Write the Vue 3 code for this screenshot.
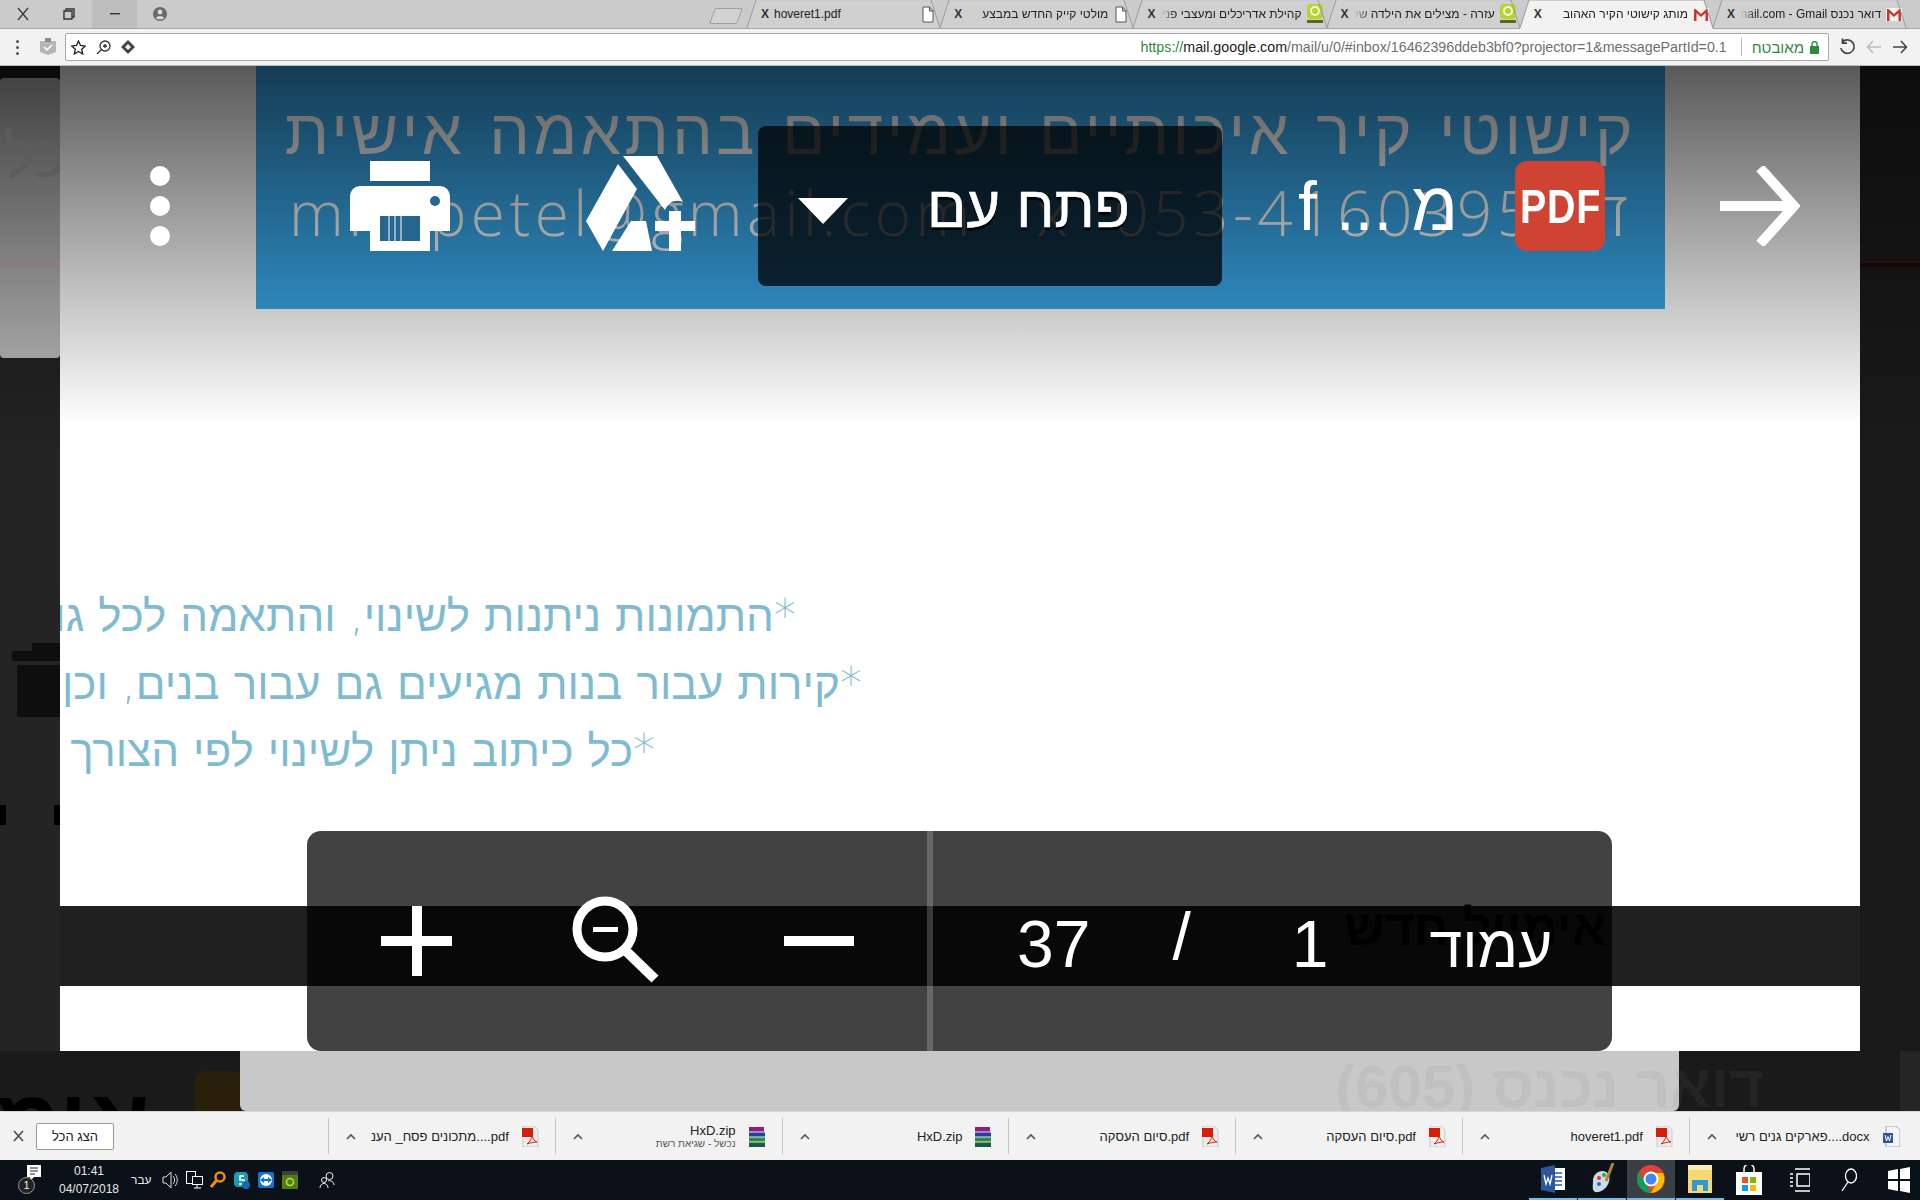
<template>
  <div class="screen">
    <header class="tabbar">
      <div class="winctl">
        <span class="wc wc-close">
          <svg width="14" height="14" viewBox="0 0 14 14"><path d="M2 1l10 12M12 1L2 13" stroke="#333" stroke-width="1.2" fill="none" /></svg>
        </span>
        <span class="wc wc-restore">
          <svg width="12" height="12" viewBox="0 0 12 12"><path d="M3 3V1h8v8H9M1 3h8v8H1z" stroke="#333" stroke-width="1.4" fill="none" /></svg>
        </span>
        <span class="wc wc-min">
          <svg width="10" height="2" viewBox="0 0 10 2"><rect width="10" height="1.4" fill="#333" /></svg>
        </span>
        <span class="wc wc-user">
          <svg width="14" height="14" viewBox="0 0 14 14"><circle cx="7" cy="7" r="7" fill="#6a6a6a" /><circle cx="7" cy="5" r="2.4" fill="#ddd" /><path d="M2.8 11c1-2.2 7.400-2.200 8.400 0-2 1.800-6.400 1.800-8.400 0z" fill="#ddd" /></svg>
        </span>
      </div>
      <span class="newtab"></span>
      <div v-for="tab in tabs" :key="tab.id" class="tab" :class="{ active: tab.active }">
        <span class="tab-fill"></span>
        <span class="tab-x">X</span>
        <span class="tab-title" :class="{ ltr: tab.ltr }">{{ tab.title }}</span>
        <span class="fav">
          <svg v-if="tab.icon === 'doc'" width="12" height="17" viewBox="0 0 12 17"><path d="M1 1h6.500L11 4.500V16H1zM7.500 1v4H11" fill="#fff" stroke="#555" /></svg>
          <svg v-else-if="tab.icon === 'gmail'" width="16" height="13" viewBox="0 0 16 13"><rect width="16" height="13" fill="#f1f1f1" /><path d="M1 13V1h1.500L8 6l5.500-5H15v12h-2.500V5L8 9 3.500 5v8z" fill="#c5372c" /></svg>
          <svg v-else width="16" height="20" viewBox="0 0 16 20"><rect width="16" height="15" rx="4" fill="#b7d32e" /><circle cx="8" cy="7" r="4" fill="none" stroke="#f4f7d8" stroke-width="2" /><rect y="16" width="16" height="3" fill="#5c6a1e" /></svg>
        </span>
      </div>
    </header>

    <div class="toolbar">
      <span class="menu-dots"><i></i><i></i><i></i></span>
      <svg class="ext" width="18" height="18" viewBox="0 0 18 18"><path d="M1 3h16v11l-8 3-8-3z" fill="#b5b5b5" /><path d="M6 0h6v4H6z" fill="#8d8d8d" /><path d="M5 9l3 3 5-5" stroke="#fff" stroke-width="1.500" fill="none" /></svg>
      <div class="address">
        <svg width="15" height="15" viewBox="0 0 15 15"><path d="M7.500 1l2 4.500 4.800.5-3.600 3.200 1 4.800-4.200-2.500L3.300 14l1-4.800L.7 6l4.800-.5z" fill="none" stroke="#222" stroke-width="1.300" /></svg>
        <svg width="15" height="15" viewBox="0 0 15 15"><circle cx="9" cy="6" r="5" fill="none" stroke="#333" stroke-width="1.300" /><path d="M5.500 9.500L1 14M9 4v4M7 6h4" stroke="#333" stroke-width="1.300" fill="none" /></svg>
        <svg width="14" height="14" viewBox="0 0 14 14"><path d="M7 0l7 7-7 7-7-7z" fill="#444" /><path d="M7 4l3 3-3 3-3-3z" fill="#eee" /></svg>
        <span class="url"><b>https://</b><em>mail.google.com</em>/mail/u/0/#inbox/16462396ddeb3bf0?projector=1&amp;messagePartId=0.1</span>
        <span class="secure">מאובטח</span>
        <svg class="lock" width="9" height="13" viewBox="0 0 9 13"><rect y="5" width="9" height="8" fill="#2e8b3d" /><path d="M2 6V3a2.500 2.500 0 015 0v3" fill="none" stroke="#2e8b3d" stroke-width="1.400" /></svg>
      </div>
      <div class="nav">
        <svg width="18" height="18" viewBox="0 0 16 16"><path d="M4 3.500A6 6 0 112.500 9M4 .5v4h4" fill="none" stroke="#444" stroke-width="1.600" /></svg>
        <svg width="16" height="14" viewBox="0 0 16 14"><path d="M15 7H2M7 1L1.500 7 7 13" fill="none" stroke="#bcbcbc" stroke-width="1.500" /></svg>
        <svg width="16" height="14" viewBox="0 0 16 14"><path d="M1 7h13M9 1l5.500 6L9 13" fill="none" stroke="#444" stroke-width="1.500" /></svg>
      </div>
    </div>

    <main class="viewer">
      <aside class="strip strip-left">
        <div class="sliver"><span class="sliver-text">כל</span><i class="sliver-line"></i></div>
        <svg class="trash" width="48" height="74" viewBox="0 0 48 74"><path d="M0 8h48v10H0zM20 0h28v8H20zM5 22h43v52H5z" fill="#0e0e0e" /></svg>
        <div class="blips"><i></i><i></i></div>
      </aside>

      <section class="page">
        <div class="banner">
          <p class="banner-line">קישוטי קיר איכותיים ועמידים בהתאמה אישית</p>
          <p class="banner-line second">mrs.petel@gmail.com &nbsp; x &nbsp;053-4160395 : ד</p>
        </div>
        <div class="notes">
          <p v-for="note in notes" :key="note.width" class="note" :style="{ width: note.width + 'px' }">{{ note.text }}</p>
        </div>
      </section>

      <aside class="strip strip-right"><i class="strip-line"></i></aside>

      <div class="lower">
        <span class="lower-word">אימ</span>
        <span class="lower-tag"></span>
        <div class="lower-box"></div>
        <span class="lower-title">דואר נכנס (605)</span>
        <span class="lower-edge"></span>
      </div>

      <div class="shade"></div>

      <div class="top-controls">
        <span class="dots"><i></i><i></i><i></i></span>
        <svg class="ic-print" width="100" height="90" viewBox="0 0 100 90">
          <path d="M20 0h60v20H20zM10 25h80a10 10 0 0110 10v35H80v20H20V70H0V35a10 10 0 0110-10z" fill="#fff" />
          <circle cx="85" cy="40" r="5" fill="#24668f" />
          <rect x="30" y="55" width="40" height="25" fill="#24668f" />
          <path d="M39 55v25M45 55v25M51 55v25" stroke="#fff" stroke-width="1" />
        </svg>
        <svg class="ic-drive" width="109" height="95" viewBox="0 0 109 95">
          <path d="M32 8L0 65l17 30 34-62z" fill="#fff" />
          <path d="M37 0h34l26 46c-8-3-14 0-18 8z" fill="#fff" />
          <path d="M26 95l19-30h15l6 30z" fill="#fff" />
          <path d="M69 65h14V55h12v10h14v10H95v20H83V75H69z" fill="#fff" />
        </svg>
        <div class="open-with">
          <span class="caret"></span>
          <span class="open-label">פתח עם</span>
        </div>
        <span class="file-name">מ ... f</span>
        <div class="pdf-badge"><span>PDF</span></div>
        <svg class="ic-arrow" width="80" height="80" viewBox="0 0 80 80"><path d="M0 40h72M40 2l34 38-34 38" fill="none" stroke="#fff" stroke-width="10" /></svg>
      </div>

      <div class="band"><span class="band-text">אימייל חדש</span></div>

      <div class="pager">
        <div class="pager-zoom">
          <svg width="71" height="70" viewBox="0 0 71 70"><path d="M31 0h10v30h30v10H41v30H31V40H0V30h31z" fill="#fff" /></svg>
          <svg class="ic-mag" width="88" height="88" viewBox="0 0 88 88"><circle cx="33" cy="33" r="28" fill="none" stroke="#fff" stroke-width="9" /><path d="M21 31h25v5H21z" fill="#fff" /><path d="M55 56l28 27" stroke="#fff" stroke-width="10" /></svg>
          <svg class="ic-minus" width="70" height="10" viewBox="0 0 70 10"><rect width="70" height="10" fill="#fff" /></svg>
        </div>
        <i class="pager-rule"></i>
        <div class="pager-count">
          <span class="n n-total">37</span>
          <span class="n n-slash">/</span>
          <span class="n n-current">1</span>
          <span class="n n-word">עמוד</span>
        </div>
      </div>
    </main>

    <div class="downloads">
      <svg class="dl-close" width="11" height="12" viewBox="0 0 11 12"><path d="M1 1l9 10M10 1L1 11" stroke="#555" stroke-width="1.800" /></svg>
      <button class="show-all">הצג הכל</button>
      <div class="dl-list">
        <div v-for="item in downloads" :key="item.id" class="dl-item">
          <svg width="10" height="7" viewBox="0 0 10 7"><path d="M1 6l4-4 4 4" fill="none" stroke="#555" stroke-width="1.600" /></svg>
          <div class="dl-text">
            <span class="dl-name">{{ item.name }}</span>
            <span v-if="item.note" class="dl-note">{{ item.note }}</span>
          </div>
          <svg v-if="item.kind === 'pdf'" class="dl-icon" width="17" height="21" viewBox="0 0 17 21"><path d="M1 0h11l4 4v17H1z" fill="#eee" stroke="#c8c8c8" /><rect y="2" width="11" height="9" fill="#d81e06" /><path d="M5 18c3-2 5-6 5-9 1 4 2 6 5 7-4 0-7 1-10 2z" fill="none" stroke="#d81e06" /></svg>
          <svg v-else-if="item.kind === 'zip'" class="dl-icon" width="17" height="21" viewBox="0 0 17 21"><rect y="1" width="15" height="5" fill="#8e1f7d" /><rect y="6" width="16" height="5" fill="#2a3f9a" /><rect y="11" width="16" height="5" fill="#2f8a4a" /><rect y="16" width="16" height="5" fill="#1c5a3a" /><path d="M0 6h16M0 11h16M0 16h16" stroke="#e8e8e8" /></svg>
          <svg v-else class="dl-icon" width="17" height="21" viewBox="0 0 17 21"><path d="M3 0h10l4 4v17H3z" fill="#f5f5f5" stroke="#9aa5b8" /><rect y="7" width="10" height="10" fill="#2b579a" /><path d="M2 9l1.500 6L5 10.500 6.500 15 8 9" fill="none" stroke="#fff" /></svg>
        </div>
      </div>
    </div>

    <footer class="taskbar">
      <div class="tray">
        <span class="action">
          <svg width="16" height="16" viewBox="0 0 16 16"><path d="M1 0h14v12H8l-4 4v-4H1z" fill="#fff" /><path d="M4 3h8M4 6h8M4 9h5" stroke="#222" /></svg>
          <b class="action-count">1</b>
        </span>
        <span class="clock"><span>01:41</span><span>04/07/2018</span></span>
        <span class="lang">עבר</span>
        <svg class="t1" width="16" height="18" viewBox="0 0 16 18"><path d="M1 6h3l5-5v16l-5-5H1z" fill="none" stroke="#ddd" /><path d="M11 5c2 2 2 6 0 8M13 3c3 3 3 9 0 12" fill="none" stroke="#ddd" /></svg>
        <svg class="t2" width="17" height="18" viewBox="0 0 17 18"><rect x=".5" y=".5" width="9" height="12" fill="none" stroke="#fff" /><rect x="6.500" y="5.500" width="10" height="8" fill="#0a1118" stroke="#fff" /><path d="M11 14v3M8 17h7" stroke="#fff" /></svg>
        <svg class="t3" width="16" height="18" viewBox="0 0 16 18"><circle cx="10" cy="6" r="4.500" fill="none" stroke="#f08a1c" stroke-width="2.500" /><path d="M6.500 9.500L1 16" stroke="#f08a1c" stroke-width="3" /></svg>
        <svg class="t4" width="16" height="18" viewBox="0 0 16 18"><rect y="1" width="14" height="15" rx="4" fill="#1f9bb0" /><path d="M10 5H6v4h4v4H5" fill="none" stroke="#fff" stroke-width="1.500" /><circle cx="12" cy="14" r="4" fill="#1765b5" /></svg>
        <svg class="t5" width="16" height="18" viewBox="0 0 16 18"><rect y="1" width="16" height="16" rx="2" fill="#0e76d2" /><circle cx="8" cy="9" r="6" fill="#fff" /><path d="M2 9l4-3v2h4V6l4 3-4 3v-2H6v2z" fill="#0e76d2" /></svg>
        <svg class="t6" width="16" height="18" viewBox="0 0 16 18"><rect width="16" height="18" fill="#3b3f42" /><rect y="4" width="16" height="14" fill="#4f7d10" /><circle cx="8" cy="11" r="3.500" fill="none" stroke="#b6e24a" stroke-width="1.500" /></svg>
        <svg class="t7" width="16" height="18" viewBox="0 0 16 18"><circle cx="10.500" cy="5" r="3.500" fill="none" stroke="#eee" /><circle cx="5" cy="9" r="2.500" fill="none" stroke="#eee" /><path d="M1 17c0-6 8-6 8 0M9 10c3-1 6 1 6 4" fill="none" stroke="#eee" /></svg>
      </div>
      <div class="apps">
        <span class="app on">
          <svg width="24" height="28" viewBox="0 0 24 28"><path d="M8 3h16v22H8z" fill="#fff" /><path d="M11 8h10M11 12h10M11 16h10M11 20h10" stroke="#2b579a" stroke-width="1.600" /><path d="M0 3l14-3v28L0 25z" fill="#2b579a" /><path d="M3 10l2 9 2-6 2 6 2-9" fill="none" stroke="#fff" stroke-width="1.300" /></svg>
        </span>
        <span class="app on">
          <svg width="24" height="32" viewBox="0 0 24 32"><path d="M3 18c0-8 8-12 13-9 5 3 4 10 1 14-3 5-11 8-13 5-2-2-1-6-1-10z" fill="#c9dbe6" /><circle cx="9" cy="15" r="2" fill="#d33" /><circle cx="14" cy="12" r="2" fill="#3a3" /><circle cx="9" cy="21" r="2" fill="#36c" /><path d="M23 0l-7 18" stroke="#b5803a" stroke-width="3" /></svg>
        </span>
        <span class="app on active">
          <svg width="28" height="28" viewBox="0 0 28 28"><circle cx="14" cy="14" r="14" fill="#db4437" /><path d="M14 28a14 14 0 01-12-21l7 12z" fill="#0f9d58" /><path d="M14 8h12a14 14 0 01-12 20l6-11z" fill="#fbbc05" /><circle cx="14" cy="14" r="6.500" fill="#4285f4" stroke="#fff" stroke-width="2" /></svg>
        </span>
        <span class="app on">
          <svg width="24" height="28" viewBox="0 0 24 28"><path d="M0 0h24v28H0z" fill="#f8d775" /><path d="M0 0h24v5H0z" fill="#fcecb0" /><path d="M4 26V15h16v11h-5v-6H9v6z" fill="#2b9ad6" /></svg>
        </span>
        <span class="app">
          <svg width="26" height="30" viewBox="0 0 26 30"><path d="M8 7V4a5 5 0 0110 0v3" fill="none" stroke="#fff" stroke-width="1.500" /><rect y="7" width="26" height="23" fill="#fff" /><rect x="6" y="12" width="6" height="6" fill="#f25022" /><rect x="14" y="12" width="6" height="6" fill="#7fba00" /><rect x="6" y="20" width="6" height="6" fill="#00a4ef" /><rect x="14" y="20" width="6" height="6" fill="#ffb900" /></svg>
        </span>
        <svg class="a-task" width="20" height="26" viewBox="0 0 20 26"><path d="M5 2h15M5 24h15M7 7h13v12H7zM0 7h3M0 11h3M0 15h3M0 19h3" fill="none" stroke="#fff" stroke-width="1.500" /></svg>
        <svg class="a-search" width="16" height="24" viewBox="0 0 16 24"><ellipse cx="10" cy="8" rx="5.500" ry="7" fill="none" stroke="#fff" stroke-width="1.300" /><path d="M7 14L1 23" stroke="#fff" stroke-width="1.300" /></svg>
        <svg class="a-win" width="22" height="26" viewBox="0 0 22 26"><path d="M0 4l10-2v10H0zM12 2l10-2v12H12zM0 14h10v10L0 22zM12 14h10v12l-10-2z" fill="#fff" /></svg>
      </div>
    </footer>
  </div>
</template>

<script setup>
const tabs = [
  { id: 6, title: "hoveret1.pdf", icon: "doc", ltr: true },
  { id: 5, title: "מולטי קייק החדש במבצע", icon: "doc" },
  { id: 4, title: "קהילת אדריכלים ומעצבי פנים", icon: "site" },
  { id: 3, title: "עזרה - מצילים את הילדה שלנו", icon: "site" },
  { id: 2, title: "מותג קישוטי הקיר האהוב", icon: "gmail", active: true },
  { id: 1, title: "דואר נכנס nakhon@gmail.com - Gmail", icon: "gmail" },
];

const notes = [
  { text: "*התמונות ניתנות לשינוי, והתאמה לכל גודל", width: 736 },
  { text: "*קירות עבור בנות מגיעים גם עבור בנים, וכן להיפך", width: 802 },
  { text: "*כל כיתוב ניתן לשינוי לפי הצורך", width: 595 },
];

const downloads = [
  { id: 7, name: "מתכונים פסח_ הענ....pdf", kind: "pdf" },
  { id: 6, name: "HxD.zip", note: "נכשל - שגיאת רשת", kind: "zip" },
  { id: 5, name: "HxD.zip", kind: "zip" },
  { id: 4, name: "סיום העסקה.pdf", kind: "pdf" },
  { id: 3, name: "סיום העסקה.pdf", kind: "pdf" },
  { id: 2, name: "hoveret1.pdf", kind: "pdf" },
  { id: 1, name: "פארקים גנים רשי....docx", kind: "doc" },
];
</script>

<style>
html,
body {
  margin: 0;
  background: #111;
}
</style>

<style scoped>
.screen {
  width: 1920px;
  height: 1200px;
  display: flex;
  flex-direction: column;
  overflow: hidden;
  font-family: "Liberation Sans", Arial, sans-serif;
}

/* tab strip */
.tabbar {
  height: 28px;
  flex: none;
  display: flex;
  align-items: stretch;
  background: #cbcbcb;
  border-bottom: 1px solid #a3a3a3;
}
.winctl {
  width: 712px;
  flex: none;
  display: flex;
  align-items: center;
}
.wc {
  height: 28px;
  display: flex;
  align-items: center;
  justify-content: center;
}
.wc-close {
  width: 46px;
}
.wc-restore {
  width: 46px;
}
.wc-min {
  width: 45px;
  background: #bdbdbd;
}
.wc-user {
  width: 46px;
}
.newtab {
  width: 26px;
  height: 14px;
  flex: none;
  margin: 8px 7px 0 0;
  border: 1px solid #9d9d9d;
  border-radius: 2px;
  background: #d2d2d2;
  transform: skewX(-20deg);
}
.tab {
  width: 193.200px;
  flex: none;
  position: relative;
  display: flex;
  align-items: center;
  gap: 5px;
  padding: 0 2px 0 14px;
  box-sizing: border-box;
}
.tab::before,
.tab::after {
  content: "";
  position: absolute;
  top: 0;
  bottom: 0;
  width: 1px;
  background: #9b9b9b;
  z-index: 1;
}
.tab::before {
  left: 4px;
  transform: skewX(-18deg);
}
.tab::after {
  right: 4px;
  transform: skewX(18deg);
}
.tab-fill {
  position: absolute;
  inset: 1px 0 0;
  background: #d0d0d0;
  clip-path: polygon(9px 0, calc(100% - 9px) 0, 100% 100%, 0 100%);
}
.tab.active .tab-fill {
  inset: 1px 0 -1px;
  background: #f2f2f2;
}
.tab-x {
  position: relative;
  font-size: 12px;
  font-weight: 700;
  color: #333;
}
.tab-title {
  position: relative;
  flex: 1;
  min-width: 0;
  overflow: hidden;
  white-space: nowrap;
  direction: rtl;
  text-align: right;
  font-size: 12px;
  color: #222;
  -webkit-mask-image: linear-gradient(to right, transparent, #000 16px);
}
.tab-title.ltr {
  direction: ltr;
  text-align: left;
  -webkit-mask-image: none;
}
.fav {
  position: relative;
  width: 16px;
  flex: none;
  display: flex;
  justify-content: center;
  margin-right: 2px;
}

/* address row */
.toolbar {
  height: 37px;
  flex: none;
  display: flex;
  align-items: center;
  background: #f2f2f2;
  border-bottom: 1px solid #b8b8b8;
  box-sizing: border-box;
}
.menu-dots {
  width: 34px;
  flex: none;
  display: flex;
  flex-direction: column;
  align-items: center;
  gap: 3px;
}
.menu-dots i {
  width: 3px;
  height: 3px;
  background: #555;
  border-radius: 50%;
}
.ext {
  flex: none;
  margin: 0 8px 0 5px;
}
.address {
  width: 1764px;
  height: 28px;
  box-sizing: border-box;
  flex: none;
  display: flex;
  align-items: center;
  gap: 10px;
  padding: 0 9px 0 5px;
  background: #fff;
  border: 1px solid #a9a9a9;
  border-radius: 2px;
}
.url {
  margin-left: auto;
  padding-right: 14px;
  border-right: 1px solid #bbb;
  font-size: 14.250px;
  line-height: 18px;
  color: #6f6f6f;
  white-space: nowrap;
}
.url b {
  font-weight: 400;
  color: #2e8b3d;
}
.url em {
  font-style: normal;
  color: #222;
}
.secure {
  direction: rtl;
  font-size: 15px;
  color: #2e8b3d;
}
.lock {
  flex: none;
  margin-left: -4px;
}
.nav {
  flex: 1;
  display: flex;
  align-items: center;
  justify-content: space-between;
  padding: 0 12px 0 9px;
}

/* dark overlay + page */
.viewer {
  height: 1045px;
  flex: none;
  position: relative;
  display: grid;
  grid-template-columns: 60px 1800px 60px;
  grid-template-rows: 985px 60px;
  overflow: hidden;
  background: #1c1c1c;
}
.strip {
  position: relative;
  overflow: hidden;
}
.strip-left {
  background: linear-gradient(#0a0a0a, #242424 40%);
}
.strip-right {
  background: linear-gradient(#0d0d0d, #1a1a1a 40%);
}
.strip-line {
  display: block;
  height: 4px;
  margin-top: 197px;
  background: #1c0404;
}
.sliver {
  height: 280px;
  margin-top: 12px;
  position: relative;
  overflow: hidden;
  background: linear-gradient(#434343, #a2a2a2);
  border-radius: 4px;
}
.sliver-text {
  position: absolute;
  top: 44px;
  right: -6px;
  font-size: 60px;
  color: #5c5c5c;
  direction: rtl;
}
.sliver-line {
  display: block;
  height: 4px;
  margin-top: 185px;
  background: #8b7b7b;
}
.trash {
  display: block;
  margin: 285px 0 0 12px;
}
.blips {
  display: flex;
  justify-content: space-between;
  margin-top: 88px;
}
.blips i {
  width: 6px;
  height: 20px;
  background: #000;
}
.page {
  overflow: hidden;
  background: #fff;
}
.banner {
  width: 1409px;
  height: 243px;
  margin-left: 196px;
  background: #3aabee;
  color: #fff;
  text-align: center;
  overflow: hidden;
}
.banner-line {
  margin: 30px 0 0;
  direction: rtl;
  white-space: nowrap;
  font-family: "DejaVu Sans", sans-serif;
  font-weight: 200;
  font-size: 64px;
  letter-spacing: 3.500px;
  line-height: 72px;
}
.banner-line.second {
  margin-top: 8px;
  direction: ltr;
  font-family: "Open Sans", "DejaVu Sans", sans-serif;
  font-weight: 300;
  font-size: 62px;
  letter-spacing: 4.500px;
}
.notes {
  margin-top: 273px;
}
.note {
  margin: 0;
  height: 67.500px;
  direction: rtl;
  white-space: nowrap;
  font-family: "DejaVu Sans", sans-serif;
  font-weight: 200;
  font-size: 44px;
  line-height: 67px;
  color: #7fbbd0;
}
.lower {
  grid-column: 1 / 4;
  position: relative;
  overflow: hidden;
  isolation: isolate;
  background: #1a1a1a;
}
.lower-word {
  position: absolute;
  right: 1770px;
  top: 20px;
  direction: rtl;
  font-size: 92px;
  line-height: 100px;
  font-weight: 700;
  color: #000;
}
.lower-tag {
  position: absolute;
  left: 195px;
  top: 20px;
  width: 48px;
  height: 60px;
  border-radius: 10px 10px 0 0;
  background: #2a1f08;
}
.lower-box {
  position: absolute;
  left: 240px;
  top: 0;
  width: 1439px;
  height: 60px;
  border-radius: 0 0 6px 6px;
  background: #c8c8c8;
}
.lower-title {
  position: absolute;
  right: 156px;
  top: 6px;
  direction: rtl;
  white-space: nowrap;
  font-size: 60px;
  line-height: 60px;
  font-weight: 700;
  color: #0e0e0e;
  mix-blend-mode: exclusion;
}
.lower-edge {
  position: absolute;
  right: 0;
  bottom: 0;
  width: 20px;
  height: 60px;
  background: #252525;
}

.shade {
  position: absolute;
  left: 60px;
  top: 0;
  width: 1800px;
  height: 360px;
  background: linear-gradient(rgba(0, 0, 0, 0.65), rgba(0, 0, 0, 0));
}

.top-controls {
  position: absolute;
  left: 150px;
  top: 60px;
  height: 160px;
  display: flex;
  align-items: center;
}
.dots {
  width: 20px;
  display: flex;
  flex-direction: column;
  gap: 10px;
}
.dots i {
  height: 20px;
  background: #fff;
  border-radius: 50%;
}
.ic-print {
  margin-left: 180px;
}
.ic-drive {
  margin-left: 136px;
  margin-top: -5px;
}
.open-with {
  width: 464px;
  height: 160px;
  margin-left: 63px;
  box-sizing: border-box;
  padding-left: 40px;
  display: flex;
  align-items: center;
  border-radius: 8px;
  background: rgba(0, 0, 0, 0.74);
}
.caret {
  width: 0;
  height: 0;
  border-left: 25px solid transparent;
  border-right: 25px solid transparent;
  border-top: 26px solid #fff;
  margin-top: 10px;
}
.open-label {
  margin-left: 79px;
  direction: rtl;
  white-space: nowrap;
  color: #fff;
  font-size: 58px;
  -webkit-text-stroke: 0.6px #fff;
  text-shadow: 0 3px 1px #000;
}
.file-name {
  width: 155px;
  margin-left: 81px;
  direction: rtl;
  text-align: center;
  white-space: nowrap;
  color: #fff;
  font-size: 68px;
}
.pdf-badge {
  width: 90px;
  height: 90px;
  margin-left: 57px;
  display: flex;
  align-items: center;
  justify-content: center;
  border-radius: 12px;
  background: #cf4332;
  color: #fff;
  font-size: 48px;
  font-weight: 700;
}
.pdf-badge span {
  transform: scaleX(0.82);
  letter-spacing: 1px;
}
.ic-arrow {
  margin-left: 115px;
}

.band {
  position: absolute;
  left: 60px;
  top: 840px;
  width: 1800px;
  height: 80px;
  box-sizing: border-box;
  padding-right: 254px;
  display: flex;
  justify-content: flex-end;
  background: #202020;
}
.band-text {
  direction: rtl;
  white-space: nowrap;
  font-size: 50px;
  line-height: 44px;
  font-weight: 700;
  color: #000;
}
.pager {
  position: absolute;
  left: 307px;
  top: 765px;
  width: 1305px;
  height: 220px;
  display: flex;
  border-radius: 14px;
  background: rgba(0, 0, 0, 0.74);
}
.pager-zoom {
  width: 620px;
  flex: none;
  box-sizing: border-box;
  padding-left: 74px;
  display: flex;
  align-items: center;
}
.ic-mag {
  margin-left: 120px;
  margin-top: -3px;
}
.ic-minus {
  margin-left: 124px;
}
.pager-rule {
  width: 6px;
  flex: none;
  background: rgba(255, 255, 255, 0.2);
}
.pager-count {
  flex: 1;
  position: relative;
  padding-left: 84px;
  display: flex;
  align-items: baseline;
  color: #fff;
  padding-top: 68px;
}
.n {
  font-size: 66px;
  line-height: 90px;
  white-space: nowrap;
}
.n-slash {
  margin-left: 82px;
  transform: translateY(-8px);
}
.n-current {
  margin-left: 101px;
}
.n-word {
  margin-left: 101px;
  direction: rtl;
  font-size: 59px;
}

/* downloads shelf */
.downloads {
  height: 49px;
  flex: none;
  display: flex;
  align-items: center;
  background: #f2f2f2;
  border-top: 1px solid #d6d6d6;
  box-sizing: border-box;
}
.dl-close {
  margin-left: 13px;
  flex: none;
}
.show-all {
  width: 78px;
  height: 27px;
  margin-left: 12px;
  padding: 0;
  flex: none;
  direction: rtl;
  background: #fff;
  border: 1px solid #9a9a9a;
  border-radius: 2px;
  font-family: inherit;
  font-size: 13px;
  color: #222;
}
.dl-list {
  display: flex;
  margin-left: 214px;
}
.dl-item {
  width: 226.800px;
  height: 36px;
  box-sizing: border-box;
  display: flex;
  align-items: center;
  padding: 0 16px 0 17px;
  border-left: 1px solid #c4c4c4;
}
.dl-text {
  flex: 1;
  min-width: 0;
  display: flex;
  flex-direction: column;
  align-items: flex-end;
  padding-right: 13px;
}
.dl-name {
  font-size: 13px;
  color: #222;
  white-space: nowrap;
}
.dl-note {
  direction: rtl;
  font-size: 10px;
  color: #555;
  white-space: nowrap;
}
.dl-icon {
  flex: none;
}

/* windows taskbar */
.taskbar {
  height: 40px;
  flex: none;
  display: flex;
  justify-content: space-between;
  background: #0a1118;
}
.tray {
  display: flex;
  align-items: center;
  padding-left: 18px;
}
.action {
  position: relative;
  width: 24px;
  height: 30px;
}
.action svg {
  position: absolute;
  left: 8px;
  top: 0;
}
.action-count {
  position: absolute;
  left: 0;
  top: 12px;
  width: 15px;
  height: 15px;
  border: 1px solid #999;
  border-radius: 50%;
  background: #222;
  color: #eee;
  font-size: 11px;
  font-weight: 400;
  line-height: 15px;
  text-align: center;
}
.clock {
  width: 64px;
  margin-left: 15px;
  display: flex;
  flex-direction: column;
  align-items: center;
  gap: 4px;
  font-size: 12px;
  line-height: 14px;
  color: #e8e8e8;
}
.lang {
  margin-left: 10px;
  direction: rtl;
  font-size: 12px;
  color: #e8e8e8;
}
.t1 {
  margin-left: 10px;
}
.t2,
.t4,
.t5,
.t6 {
  margin-left: 8px;
}
.t3 {
  margin-left: 7px;
}
.t7 {
  margin-left: 21px;
}
.apps {
  display: flex;
  align-items: center;
  gap: 1px;
}
.app {
  width: 48px;
  height: 40px;
  box-sizing: border-box;
  display: flex;
  align-items: center;
  justify-content: center;
}
.app.on {
  border-bottom: 2px solid #76b9ed;
}
.app.active {
  background: #3a3f44;
}
.a-task {
  margin-left: 16px;
}
.a-search {
  margin-left: 30px;
}
.a-win {
  margin: 0 10px 0 30px;
}
</style>
